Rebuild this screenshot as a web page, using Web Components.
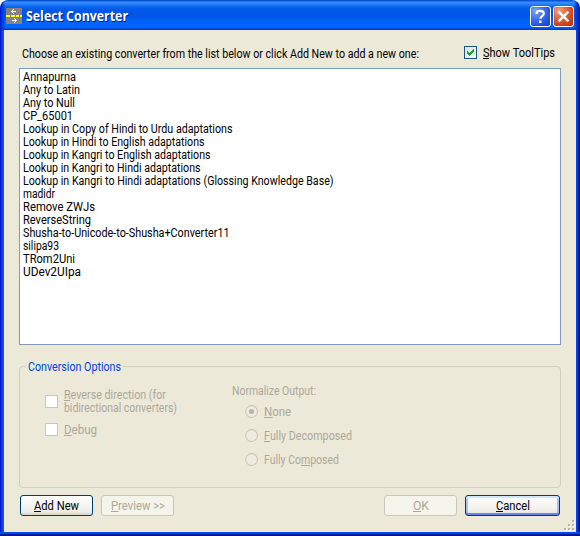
<!DOCTYPE html>
<html lang="en">
<head>
<meta charset="utf-8">
<title>Select Converter</title>
<style>
html, body { margin: 0; background: #fff; }
body { width: 580px; height: 536px; overflow: hidden; font: 12px/13px Roboto, "Liberation Sans", sans-serif; color: #000; }
</style>
</head>
<body>
<converter-dialog></converter-dialog>
<script>
const define = (name, html, setup) => {
  const template = document.createElement('template');
  template.innerHTML = html;
  customElements.define(name, class extends HTMLElement {
    connectedCallback() {
      if (this.shadowRoot) return;
      this.attachShadow({ mode: 'open' }).append(template.content.cloneNode(true));
      if (setup) setup(this, this.shadowRoot);
    }
  });
};

/* A single line of text condensed to an exact width; "&" marks the access key. */
define('fit-text', `<style>
  :host { display: block; white-space: pre; }
  span { display: inline-block; vertical-align: top; transform-origin: 0 0; }
  u { text-decoration: none; box-shadow: 0 -1px 0 currentColor inset; display: inline-block; height: 12px; line-height: 13px; }
</style><span></span>`, (host, root) => {
  const span = root.querySelector('span');
  const text = host.getAttribute('text');
  const at = text.indexOf('&');
  if (at < 0) span.textContent = text;
  else {
    const key = document.createElement('u');
    key.textContent = text[at + 1];
    span.append(text.slice(0, at), key, text.slice(at + 2));
  }
  const want = +host.getAttribute('w');
  const natural = span.getBoundingClientRect().width;
  span.style.transform = 'scaleX(' + (want / natural).toFixed(5) + ')';
  host.style.width = want + 'px';
});

define('app-icon', `<style>:host{display:block;width:16px;height:16px}svg{display:block}</style>
<svg width="16" height="16" viewBox="0 0 16 16" shape-rendering="crispEdges">
<path fill="#848284" d="M0 0h16v16H0z"/>
<path fill="#ffff00" d="M0 7h4v2H0zM5 7h4v2H5zM10 7h3v2h-3zM14 7h2v2h-2z"/>
<path fill="#fff" d="M5 3h5v1H5zM6 2h1v1H6zM7 1h1v1H7zM6 4h1v1H6zM7 5h1v1H7zM6 12h5v1H6zM9 11h1v1H9zM8 10h1v1H8zM9 13h1v1H9zM8 14h1v1H8z"/>
</svg>`);

define('caption-button', `<style>
  :host { display: block; box-sizing: border-box; width: 21px; height: 21px; border: 1px solid #fff; border-radius: 3px;
    background: radial-gradient(circle at 25% 20%, #7fa2f8 0, #3a6cec 45%, #1c48d4 85%); box-shadow: inset 0 0 1px #0c37b0; }
  :host([kind=close]) { background: radial-gradient(circle at 25% 20%, #f0a58b 0, #e25a33 45%, #c8320c 90%); box-shadow: inset 0 0 1px #a02000; }
  svg { display: block; }
  .x, :host([kind=close]) .q { display: none; }
  :host([kind=close]) .x { display: block; }
</style>
<svg class="q" width="19" height="19" viewBox="0 0 19 19"><path d="M5.7 7V6C5.7 4.2 7.2 3.8 9.2 3.8s3.6.8 3.6 2.7c0 2.6-3.4 2.5-3.4 5.3" fill="none" stroke="#fff" stroke-width="2.2"/><path fill="#fff" d="M8 13.5h2.5V16H8z"/></svg>
<svg class="x" width="19" height="19" viewBox="0 0 19 19"><path d="M4.6 4.6l9.8 9.8M14.4 4.6l-9.8 9.8" stroke="#fff" stroke-width="2.4" fill="none"/></svg>`);

define('title-bar', `<style>
  :host { display: flex; box-sizing: border-box; height: 30px; padding: 6px 6px 0; border-radius: 8px 8px 0 0;
    background: linear-gradient(90deg, #0019cf 0, #0734d6 2px, transparent 5px, transparent 574px, #0038d0 577px, #00138c 580px),
      linear-gradient(#0058d8 0, #0a4fd0 1px, #3b90ff 2px, #2a80fb 4px, #0562ee 7px, #0058e6 10px, #0056e4 16px, #0060f7 21px, #0068ff 26px, #005ff0 28px, #0043cf 29px, #0036b8 30px); }
  app-icon { margin-top: 2px; }
  fit-text { margin: 1px 0 0 4px; font: bold 14px/18px "Open Sans", "Noto Sans", sans-serif; color: #fff; text-shadow: 1px 1px 0 #0a1883; }
  .buttons { display: flex; gap: 2px; }
  .title { flex: 1; }
</style>
<app-icon></app-icon>
<div class="title"><fit-text text="Select Converter" w="102"></fit-text></div>
<div class="buttons"><caption-button></caption-button><caption-button kind="close"></caption-button></div>`);

define('check-box', `<style>
  :host { display: flex; align-items: center; gap: 6px; }
  i { box-sizing: border-box; flex: none; width: 13px; height: 13px; border: 1px solid #1c5180; background: linear-gradient(135deg, #dcdcd7, #fff); }
  div { padding-top: 1px; margin-bottom: -1px; }
  :host([disabled]) { color: #aca899; }
  :host([disabled]) i { border-color: #cac8bb; background: #fff; }
  svg { display: none; }
  :host([checked]) svg { display: block; }
</style>
<i><svg width="11" height="11" viewBox="0 0 11 11" shape-rendering="crispEdges"><path fill="#21a121" d="M2 4h1v3H2zM3 5h1v3H3zM4 6h1v3H4zM5 5h1v3H5zM6 4h1v3H6zM7 3h1v3H7zM8 2h1v3H8z"/></svg></i>
<div><slot></slot></div>`);

define('radio-button', `<style>
  :host { display: flex; align-items: center; gap: 6px; height: 13px; color: #aca899; }
  svg { display: block; flex: none; }
  div { padding-top: 1px; margin-bottom: -1px; }
  circle.dot { display: none; }
  :host([checked]) circle.dot { display: block; }
</style>
<svg width="13" height="13" viewBox="0 0 13 13"><circle cx="6.5" cy="6.5" r="5.9" fill="#efecdf" stroke="#cac8bb" stroke-width="1.1"/><circle class="dot" cx="6.5" cy="6.5" r="2.6" fill="#b9b7aa"/></svg>
<div><slot></slot></div>`);

define('push-button', `<style>
  :host { display: flex; box-sizing: border-box; justify-content: center; height: 21px; width: 73px; padding-top: 4px; border: 1px solid #003c74; border-radius: 3px;
    background: linear-gradient(#fff, #f4f3ee 60%, #ecebe5 85%, #d8d0c4); }
  :host([default]) { width: 95px; box-shadow: inset 0 2px 0 #cee7ff, inset 0 -2px 0 #6982ee, inset 2px 0 0 #a9c3f3, inset -2px 0 0 #a3bef2; }
  :host([disabled]) { color: #aca899; border-color: #c9c7ba; background: #f5f4ea; }
</style><slot></slot>`);

define('list-box', `<style>
  :host { display: block; box-sizing: border-box; height: 277px; border: 1px solid #7f9db9; background: #fff; padding: 2px 3px; }
</style><slot></slot>`);

define('group-box', `<style>
  :host { display: block; }
  fieldset { box-sizing: border-box; height: 128px; margin: 0; padding: 0; border: 1px solid #d0d0bf; border-radius: 4px; min-width: 0; }
  legend { margin-left: 6px; padding: 0 2px; height: 13px; color: #0046d5; }
  legend div { padding-top: 1px; }
</style><fieldset><legend><div><slot name="legend"></slot></div></legend><slot></slot></fieldset>`);

define('size-grip', `<style>:host{display:block;width:12px;height:12px}svg{display:block}</style>
<svg width="12" height="12" viewBox="0 0 12 12" shape-rendering="crispEdges">
<path fill="#fff" d="M9 1h2v2H9zM5 5h2v2H5zM9 5h2v2H9zM1 9h2v2H1zM5 9h2v2H5zM9 9h2v2H9z"/>
<path fill="#b8b4a3" d="M8 0h2v2H8zM4 4h2v2H4zM8 4h2v2H8zM0 8h2v2H0zM4 8h2v2H4zM8 8h2v2H8z"/></svg>`);

define('converter-dialog', `<style>
  :host { display: block; width: 580px; height: 536px; }
  main { box-sizing: border-box; height: 506px; border: solid; border-width: 0 4px 4px; border-color: transparent; padding: 0 15px 0; position: relative;
    background: linear-gradient(#ece9d8, #ece9d8) padding-box,
      linear-gradient(transparent 502px, #0050ee 502px, #0042dc 504px, #001ca0 504px, #00138c) border-box,
      linear-gradient(90deg, #0019cf 0, #0019cf 1px, #0831d9 1px, #0c4be0 3px, #166aee 3px, #0855dd 4px, #0855dd 576px, #0048f1 576px, #003dde 578px, #001ea0 578px, #00138c) border-box; }
  .intro { display: flex; justify-content: space-between; height: 38px; padding: 16px 6px 0 3px; box-sizing: border-box; }
  .intro > fit-text { margin-top: 2px; }
  .intro > check-box { height: 13px; }
  group-box { margin-top: 15px; }
  .options { display: grid; grid-template-columns: 187px 1fr; padding: 0 0 0 25px; color: #aca899; }
  .checks { display: grid; align-content: start; gap: 9px; padding-top: 15px; }
  .radios { display: grid; align-content: start; gap: 11px; padding-top: 12px; }
  .radios > radio-button { margin-left: 13px; }
  .radios > :first-child { margin-bottom: -4px; }
  .checks check-box + check-box { height: 13px; }
  .actions { display: flex; gap: 8px; margin: 7px 1px 0; }
  .actions .push { flex: 1; }
  size-grip { position: absolute; right: 0; bottom: 0; }
</style>
<title-bar></title-bar>
<main>
  <div class="intro">
    <fit-text text="Choose an existing converter from the list below or click Add New to add a new one:" w="397"></fit-text>
    <check-box checked><fit-text text="&Show ToolTips" w="72"></fit-text></check-box>
  </div>
  <list-box>
    <fit-text text="Annapurna" w="53"></fit-text>
    <fit-text text="Any to Latin" w="57"></fit-text>
    <fit-text text="Any to Null" w="52"></fit-text>
    <fit-text text="CP_65001" w="50"></fit-text>
    <fit-text text="Lookup in Copy of Hindi to Urdu adaptations" w="209.5"></fit-text>
    <fit-text text="Lookup in Hindi to English adaptations" w="181.5"></fit-text>
    <fit-text text="Lookup in Kangri to English adaptations" w="187.5"></fit-text>
    <fit-text text="Lookup in Kangri to Hindi adaptations" w="177.5"></fit-text>
    <fit-text text="Lookup in Kangri to Hindi adaptations (Glossing Knowledge Base)" w="310.5"></fit-text>
    <fit-text text="madidr" w="32"></fit-text>
    <fit-text text="Remove ZWJs" w="72"></fit-text>
    <fit-text text="ReverseString" w="68"></fit-text>
    <fit-text text="Shusha-to-Unicode-to-Shusha+Converter11" w="206.5"></fit-text>
    <fit-text text="silipa93" w="36"></fit-text>
    <fit-text text="TRom2Uni" w="52"></fit-text>
    <fit-text text="UDev2UIpa" w="58"></fit-text>
  </list-box>
  <group-box>
    <fit-text slot="legend" text="Conversion Options" w="93"></fit-text>
    <div class="options">
      <div class="checks">
        <check-box disabled><fit-text text="&Reverse direction (for" w="102"></fit-text><fit-text text="bidirectional converters)" w="113"></fit-text></check-box>
        <check-box disabled><fit-text text="&Debug" w="33"></fit-text></check-box>
      </div>
      <div class="radios">
        <fit-text text="Normalize Output:" w="84"></fit-text>
        <radio-button checked><fit-text text="&None" w="27"></fit-text></radio-button>
        <radio-button><fit-text text="&Fully Decomposed" w="88"></fit-text></radio-button>
        <radio-button><fit-text text="Fully Co&mposed" w="75"></fit-text></radio-button>
      </div>
    </div>
  </group-box>
  <div class="actions">
    <push-button><fit-text text="&Add New" w="45"></fit-text></push-button>
    <push-button disabled><fit-text text="&Preview >>" w="54"></fit-text></push-button>
    <span class="push"></span>
    <push-button disabled><fit-text text="&OK" w="16"></fit-text></push-button>
    <push-button default><fit-text text="&Cancel" w="34"></fit-text></push-button>
  </div>
  <size-grip></size-grip>
</main>`);
</script>
</body>
</html>
